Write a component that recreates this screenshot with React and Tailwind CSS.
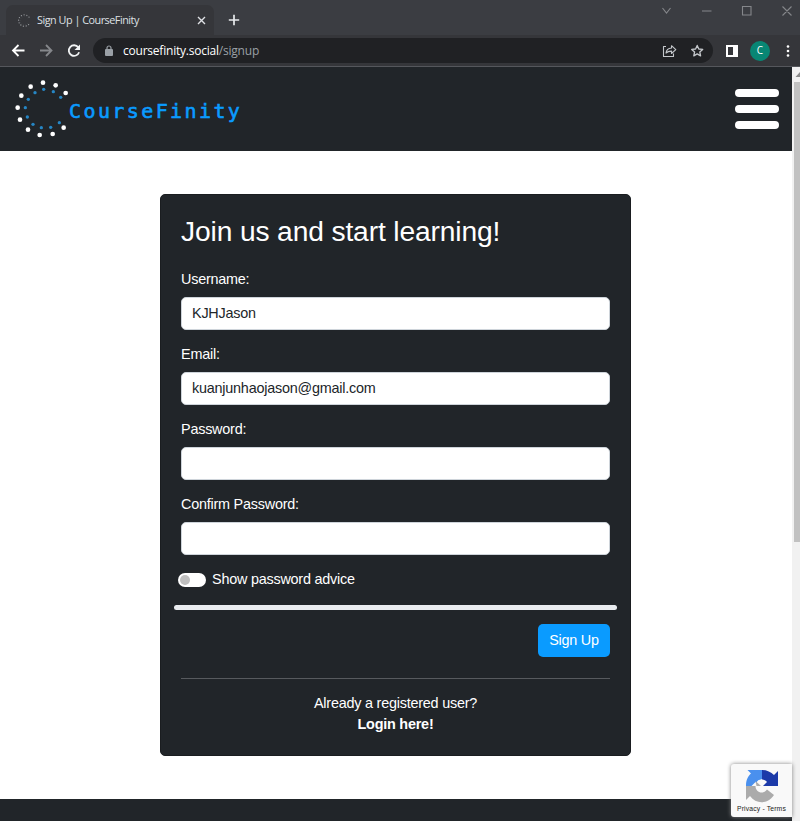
import React from "react";

const outerDots = [[129,49],[167,57],[197,80],[92,61],[64,88],[53,124],[60,160],[84,190],[119,206],[158,203],[191,184]];
const innerDots = [[131,69],[160,76],[182,93],[105,79],[85,99],[76,124],[82,152],[99,174],[124,184],[152,183],[178,169]];

function Ring({ className, outer, inner, r1, r2 }) {
  return (
    <svg className={className} viewBox="45 38 165 180">
      {outerDots.map(([x, y]) => <circle key={x + "-" + y} cx={x} cy={y} r={r1} fill={outer} />)}
      {innerDots.map(([x, y]) => <circle key={x + "-" + y} cx={x} cy={y} r={r2} fill={inner} />)}
    </svg>
  );
}

function TabStrip() {
  return (
    <div className="flex h-[35px] items-start bg-[#3b3d42]">
      <div className="mt-[5px] ml-[6px] flex h-[30px] w-[208px] items-center rounded-t-[7px] bg-[#35363a] pl-[11px] text-[#dfe1e5]">
        <Ring className="h-[13px] w-[14px]" outer="#9a9da1" inner="#4d5358" r1={9} r2={5} />
        <span className="ml-[6px] w-[153px] text-[10.8px] tracking-[-0.48px] whitespace-nowrap">Sign Up | CourseFinity</span>
        <svg className="ml-[7px] size-[9px]" viewBox="0 0 9 9" stroke="#dfe1e5" strokeWidth="1.4"><path d="M1 1l7 7M8 1l-7 7" /></svg>
      </div>
      <svg className="mt-[14px] ml-[14px] size-[12px]" viewBox="0 0 12 12" stroke="#e8eaed" strokeWidth="1.7"><path d="M6 .8v10.4M.8 6h10.4" /></svg>
      <svg className="ml-auto h-[22px] w-[140px]" viewBox="660 0 140 22" fill="none" stroke="#85878b" strokeWidth="1.1">
        <path d="M662.5 8l4 5 4-5M702 11h9.500M742.500 6.500h8.500v8.500h-8.500zM782.500 6.500l9 9M791.500 6.500l-9 9" />
      </svg>
    </div>
  );
}

function Toolbar() {
  return (
    <div className="flex h-[32px] items-center border-b border-[#55575c] bg-[#35363a]">
      <svg className="h-[31px] w-[93px]" viewBox="0 35 93 31" fill="none" strokeWidth="1.8">
        <path d="M24.500 50.500H13M18.500 45l-5.500 5.500 5.500 5.500" stroke="#fff" />
        <path d="M40 50.500h11.500M46 45l5.500 5.500-5.500 5.500" stroke="#85878b" />
        <path d="M78.300 47.300a5.300 5.300 0 1 0 .8 5" stroke="#f1f3f4" />
        <path d="M80 44.500v5.500h-5.500z" fill="#f1f3f4" />
      </svg>
      <div className="flex h-[25px] w-[620px] items-center rounded-full bg-[#202124] pl-[12px]">
        <svg className="h-[11px] w-[8px]" viewBox="0 0 8 11"><rect y="4" width="8" height="7" rx="1" fill="#9aa0a6" /><path d="M2 5V3a2 2 0 0 1 4 0v2" fill="none" stroke="#9aa0a6" strokeWidth="1.2" /></svg>
        <span className="ml-[10px] text-[12px] tracking-[-0.22px] whitespace-nowrap text-white">coursefinity.social<span className="text-[#9aa0a6]">/signup</span></span>
        <svg className="ml-auto h-[20px] w-[53px]" viewBox="660 41 53 20" fill="none" stroke="#c4c7cb" strokeWidth="1.1" strokeLinejoin="round">
          <path d="M666 46.500h-2.500v10h10v-3M666 53c.4-3.300 2.500-4.800 5.500-5v-2.300l4.300 3.900-4.300 3.900v-2.400c-2.400 0-4.100.4-5.500 1.900z" />
          <path d="M697.200 45.400l1.600 3.600 3.900.4-2.900 2.600.8 3.900-3.400-2-3.400 2 .8-3.900-2.900-2.600 3.900-.4z" strokeWidth="1.3" />
        </svg>
      </div>
      <svg className="ml-[13px] h-[12px] w-[12px]" viewBox="0 0 12 12"><path d="M0 0h12v12H0zM2 2v8h5V2z" fillRule="evenodd" fill="#fff" /></svg>
      <div className="ml-[12px] flex size-[20px] items-center justify-center rounded-full bg-[#088674] text-[10px] text-white">C</div>
      <svg className="ml-[16px] h-[12px] w-[4px]" viewBox="0 0 4 12" fill="#fff"><circle cx="2" cy="1.500" r="1.300" /><circle cx="2" cy="6" r="1.300" /><circle cx="2" cy="10.500" r="1.300" /></svg>
    </div>
  );
}

function Field({ label, value }) {
  return (
    <label className="mb-[13px] block">
      <span className="block h-[29px] leading-[22px]">{label}</span>
      <span className="flex h-[33px] items-center rounded-[5px] border border-[#ced4da] bg-white px-[10px] text-[#212529]">{value}</span>
    </label>
  );
}

function SignUpCard() {
  return (
    <div className="mt-[43px] ml-[160px] h-[562px] w-[471px] rounded-[5px] border border-[#1a1d20] bg-[#212529] px-[20px] pt-[20px] text-[14.4px] tracking-[-0.22px] text-white">
      <h1 className="mb-[20px] h-[33px] text-[28.2px] leading-[32px] tracking-[-0.13px] whitespace-nowrap">Join us and start learning!</h1>
      <Field label="Username:" value="KJHJason" />
      <Field label="Email:" value="kuanjunhaojason@gmail.com" />
      <Field label="Password:" value="" />
      <Field label="Confirm Password:" value="" />
      <div className="-ml-[3px] flex h-[22px] items-center pt-[1px]">
        <span className="flex h-[14px] w-[28px] items-center rounded-full bg-white pl-[2px]"><span className="size-[10px] rounded-full bg-[#bfbfbf]" /></span>
        <span className="ml-[6px]">Show password advice</span>
      </div>
      <div className="-mx-[7px] mt-[15px] h-[5px] rounded-full bg-[#e9ecef]" />
      <div className="mt-[14px] flex justify-end">
        <button className="h-[33px] w-[72px] rounded-[5px] bg-[#0a9bff]">Sign Up</button>
      </div>
      <div className="mt-[21px] h-px bg-[#575a5e]" />
      <div className="mt-[14px] text-center leading-[21px]">
        <p>Already a registered user?</p>
        <p className="font-bold">Login here!</p>
      </div>
    </div>
  );
}

function Recaptcha() {
  return (
    <div className="absolute top-[764px] left-[731px] flex h-[53px] w-[61px] flex-col items-center rounded-l-[3px] bg-[#f9f9f9] pt-[5px] shadow-[0_0_4px_#808080]">
      <svg className="h-[34px] w-[34px]" viewBox="0 0 34 34">
        <path d="M17 1v9l-5 1.500L6.500 17H1C1 11 3 7 6 4.500L2.500 1z" fill="#4a90ee" />
        <path d="M17 1c5 0 9 2 12 5l4-4v15H18l4-4c-1-1.500-3-2.500-5-2.500z" fill="#1c3aa9" />
        <path d="M1 17h9.500c0 6.500 7.500 9 11.500 3.500l7 5.500C22 36 11 35 5 27l-4 4z" fill="#ababab" />
        <path d="M17 10c-3.500 0-5 2-5.500 4L9 11.500 12 8z" fill="#4a90ee" />
        <path d="M10.500 12l5.500 5h-4.500z" fill="#ababab" />
      </svg>
      <span className="mt-[2px] text-[6.8px] leading-[8px] tracking-[0.15px] whitespace-nowrap text-[#222]">Privacy - Terms</span>
    </div>
  );
}

export default function App() {
  return (
    <div className="relative flex h-[821px] w-[800px] flex-col overflow-hidden bg-white font-['Liberation_Sans',Arial,sans-serif]">
      <div className="font-['Open_Sans',sans-serif]">
        <TabStrip />
        <Toolbar />
      </div>
      <div className="flex h-[754px]">
        <div className="flex w-[792px] flex-col">
          <header className="flex h-[84px] items-center bg-[#212529] pl-[15px]">
            <Ring className="h-[60px] w-[55px]" outer="#fff" inner="#2686c4" r1={7} r2={5} />
            <span className="ml-[-1px] pt-[4px] font-['DejaVu_Sans_Mono',monospace] text-[20px] tracking-[2.4px] text-[#0a9bff] [-webkit-text-stroke:0.6px_#0a9bff]">CourseFinity</span>
            <div className="mr-[13px] ml-auto flex w-[44px] flex-col gap-[8px]">
              <span className="h-[8px] rounded-full bg-white" />
              <span className="h-[8px] rounded-full bg-white" />
              <span className="h-[8px] rounded-full bg-white" />
            </div>
          </header>
          <main className="h-[648px]"><SignUpCard /></main>
          <footer className="h-[22px] bg-[#212529]" />
        </div>
        <div className="w-[8px] bg-[#f1f1f1]">
          <svg className="block h-[15px] w-[8px]" viewBox="0 0 8 15"><path d="M3.500 10L8 5v5z" fill="#8c8c8c" /></svg>
          <div className="ml-[2px] h-[460px] bg-[#c1c1c1]" />
        </div>
      </div>
      <Recaptcha />
    </div>
  );
}
